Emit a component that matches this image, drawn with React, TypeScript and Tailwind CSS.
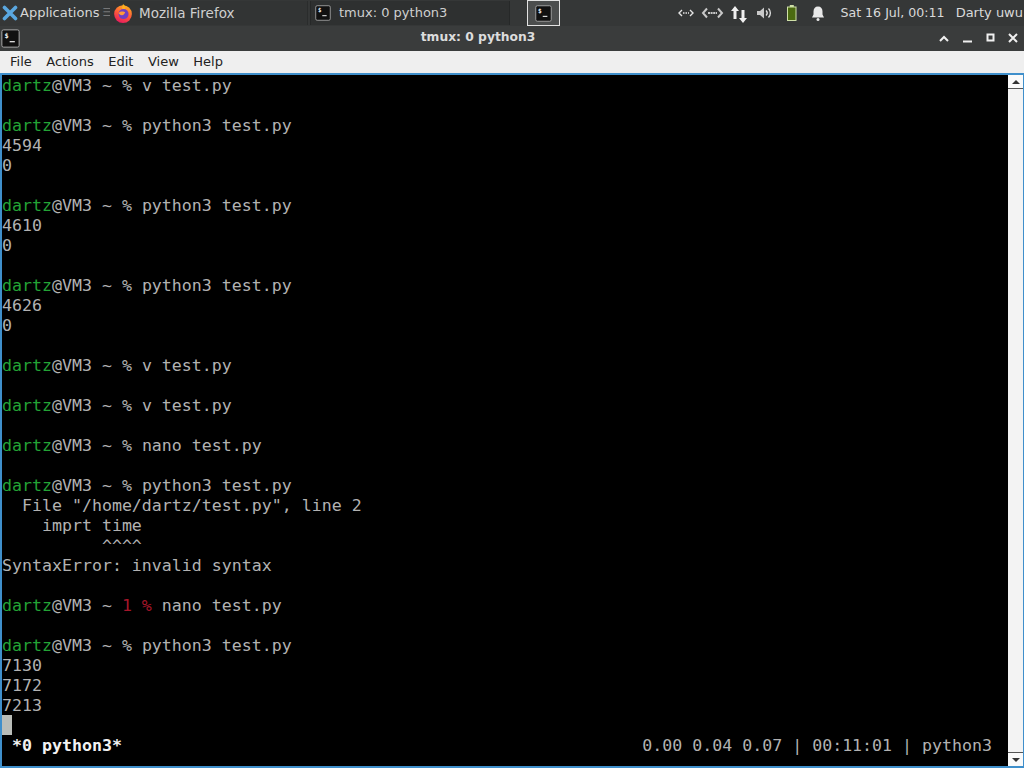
import React from "react";

const Term = ({ size = 22 }: { size?: number }) => (
  <svg width={size} height={size} viewBox="0 0 22 22" className="shrink-0">
    <rect x="1" y="1" width="20" height="20" rx="2" fill="#111" stroke="#bdbdbd" strokeWidth="1" />
    <text x="4" y="10" fontSize="8" fill="#eee" fontFamily="'DejaVu Sans Mono', monospace" fontWeight="700">$</text>
    <rect x="10" y="14" width="6" height="1.4" fill="#eee" />
  </svg>
);

const Firefox = () => (
  <svg width="20" height="20" viewBox="0 0 18 18" className="shrink-0">
    <defs>
      <linearGradient id="ff" x1="0.7" y1="0" x2="0.3" y2="1">
        <stop offset="0" stopColor="#ffb01f" />
        <stop offset="0.5" stopColor="#ff5a3a" />
        <stop offset="1" stopColor="#e5185f" />
      </linearGradient>
    </defs>
    <circle cx="9" cy="10" r="8" fill="url(#ff)" />
    <path d="M9 1c2 1.500 2.500 3 2 5l-3-1z" fill="#ffb01f" />
    <circle cx="9.500" cy="10" r="4.500" fill="#6d3fc4" />
    <path d="M5 9c2 -2 5 -1.500 6 -.5c-1 1-1 2.500-3 2.500c-1.500 0-2.500-1-3-2z" fill="#ff9a3a" />
  </svg>
);

const Line = ({ p, cmd, err }: { p?: boolean; cmd?: string; err?: boolean }) => (
  <div className="h-5 whitespace-pre">
    {p && (
      <>
        <span className="text-[#23a335]">dartz</span>
        <span>@VM3 ~ </span>
        {err ? <span className="text-[#a5162a]">1 % </span> : <span>% </span>}
      </>
    )}
    {cmd}
  </div>
);

export default function App() {
  return (
    <div className="w-[1024px] h-[768px] overflow-hidden flex flex-col bg-black font-['Liberation_Sans',sans-serif]">
      {/* top panel */}
      <div className="h-[26px] bg-[#353737] flex items-center text-[#d6d6d6] text-[13px] font-['DejaVu_Sans',sans-serif]">
        <div className="w-[110px] flex items-center pl-[2px] shrink-0">
          <svg width="16" height="16" viewBox="0 0 16 16" className="shrink-0">
            <path d="M2.500 2.500 L13.500 13.500 M13.500 2.500 L2.500 13.500" stroke="#5aa7e0" strokeWidth="3.600" strokeLinecap="round" fill="none" />
          </svg>
          <span className="ml-[2px]">Applications</span>
          <span className="ml-[3px] text-[#777] text-[11px]">☰</span>
        </div>
        <div className="w-[198px] h-[24px] flex items-center pl-[3px] bg-[#323434] border-r border-[#2a2c2c] shrink-0">
          <Firefox />
          <span className="ml-[6px] text-[13.500px] text-[#cfcfcf]">Mozilla Firefox</span>
        </div>
        <div className="w-[200px] h-[24px] ml-[2px] flex items-center pl-[4px] bg-[#2e3030] border-x border-[#262828] shrink-0">
          <Term size={16} />
          <span className="ml-[8px] text-[#cfcfcf]">tmux: 0 python3</span>
        </div>
        <div className="w-[33px] h-[26px] ml-[17px] flex items-center justify-center bg-[#4c4e4e] border border-[#e2e2e2] shrink-0">
          <Term size={17} />
        </div>
        <div className="flex-1" />
        <div className="flex items-center text-[#dadada] shrink-0">
          <svg width="160" height="26" viewBox="0 0 160 26" className="shrink-0" fill="none" stroke="#e4e4e4">
            <path d="M12 10 l-3 3 l3 3 M20 10 l3 3 l-3 3" strokeWidth="1.400" />
            <path d="M13 13h6" strokeWidth="1.400" strokeDasharray="1.500 1" />
            <path d="M37 8.500 l-4 4.500 l4 4.500 M48 8.500 l4 4.500 l-4 4.500" strokeWidth="2" stroke="#c8c8c8" />
            <path d="M38 13h9" strokeWidth="2" stroke="#c8c8c8" strokeDasharray="2 .6" />
            <path d="M65 6l4 5h-2.500v8h-3v-8h-2.500z" fill="#f0f0f0" stroke="none" />
            <path d="M71.500 10h3v8h2.500l-4 5l-4-5h2.500z" fill="#f0f0f0" stroke="none" />
            <path d="M87 11h3l4-3.500v11l-4-3.500h-3z" fill="#c8c8c8" stroke="none" />
            <path d="M96 10.500c1.500 1.500 1.500 3.500 0 5 M98.500 8.500c2.500 2.500 2.500 6.500 0 9" strokeWidth="1.300" />
            <rect x="117.500" y="7" width="8.500" height="13.500" fill="#4b6a10" stroke="#cfe0a8" strokeWidth="1" />
            <rect x="119.800" y="5" width="4" height="2" fill="#cfe0a8" stroke="none" />
            <path d="M148 6.500c3 0 4.500 2 4.500 5v3l1.500 3h-12l1.500-3v-3c0-3 1.500-5 4.500-5z" fill="#e8e8e8" stroke="none" />
            <circle cx="148" cy="19.500" r="1.500" fill="#e8e8e8" stroke="none" />
          </svg>
          <span className="ml-[10px] text-[12.600px] whitespace-nowrap">Sat 16 Jul, 00:11</span>
          <span className="ml-[11px] mr-[1px] text-[13px] whitespace-nowrap">Darty uwu</span>
        </div>
      </div>

      {/* title bar */}
      <div className="h-[25px] bg-[#3a3c3c] flex items-center text-[#dcdcdc]">
        <div className="pl-[1px] shrink-0"><Term size={19} /></div>
        <div className="flex-1 text-center pl-[8px] pb-[2px] text-[12.300px] font-bold font-['DejaVu_Sans',sans-serif]">tmux: 0 python3</div>
        <svg width="96" height="25" viewBox="0 0 96 25" className="shrink-0" fill="none" stroke="#f0f0f0" strokeWidth="2">
          <path d="M12 15l4-4l4 4" />
          <path d="M35 15.500h9" />
          <rect x="59.500" y="8.500" width="6" height="6" />
          <path d="M81 8l8 8M89 8l-8 8" />
        </svg>
      </div>

      {/* menu bar */}
      <div className="h-[22px] bg-[#efefef] flex items-center text-[#222] text-[13px] pl-[10px] gap-[14.500px] font-['DejaVu_Sans',sans-serif]">
        <span>File</span>
        <span>Actions</span>
        <span>Edit</span>
        <span>View</span>
        <span>Help</span>
      </div>

      {/* terminal frame */}
      <div className="h-[695px] flex border-y-[2px] border-l-[2px] border-r border-[#3f8fcb]">
        <div className="flex-1 bg-black text-[#b2b2b2] text-[16.600px] leading-[22px] font-['DejaVu_Sans_Mono',monospace] min-w-0 flex flex-col">
          <Line p cmd="v test.py" />
          <Line />
          <Line p cmd="python3 test.py" />
          <Line cmd="4594" />
          <Line cmd="0" />
          <Line />
          <Line p cmd="python3 test.py" />
          <Line cmd="4610" />
          <Line cmd="0" />
          <Line />
          <Line p cmd="python3 test.py" />
          <Line cmd="4626" />
          <Line cmd="0" />
          <Line />
          <Line p cmd="v test.py" />
          <Line />
          <Line p cmd="v test.py" />
          <Line />
          <Line p cmd="nano test.py" />
          <Line />
          <Line p cmd="python3 test.py" />
          <Line cmd={'  File "/home/dartz/test.py", line 2'} />
          <Line cmd="    imprt time" />
          <Line cmd="          ^^^^" />
          <Line cmd="SyntaxError: invalid syntax" />
          <Line />
          <Line p err cmd="nano test.py" />
          <Line />
          <Line p cmd="python3 test.py" />
          <Line cmd="7130" />
          <Line cmd="7172" />
          <Line cmd="7213" />
          <div className="h-5 w-[10px] bg-[#b9bdb9]" />
          <div className="h-5 flex justify-between whitespace-pre pr-[16px]">
            <span className="font-bold text-[#f2f2f2]"> *0 python3*</span>
            <span>0.00 0.04 0.07 | 00:11:01 | python3</span>
          </div>
        </div>
        <div className="w-[15px] bg-[#f3f3f3] flex flex-col justify-between">
          <div className="h-[14px] flex items-center justify-center border-b border-[#555] bg-[#fafafa]">
            <div className="w-0 h-0 border-x-[4px] border-x-transparent border-b-[4px] border-b-[#333]" />
          </div>
          <div className="h-[14px] flex items-center justify-center border-t border-[#555] bg-[#fafafa]">
            <div className="w-0 h-0 border-x-[4px] border-x-transparent border-t-[4px] border-t-[#333]" />
          </div>
        </div>
      </div>
    </div>
  );
}
